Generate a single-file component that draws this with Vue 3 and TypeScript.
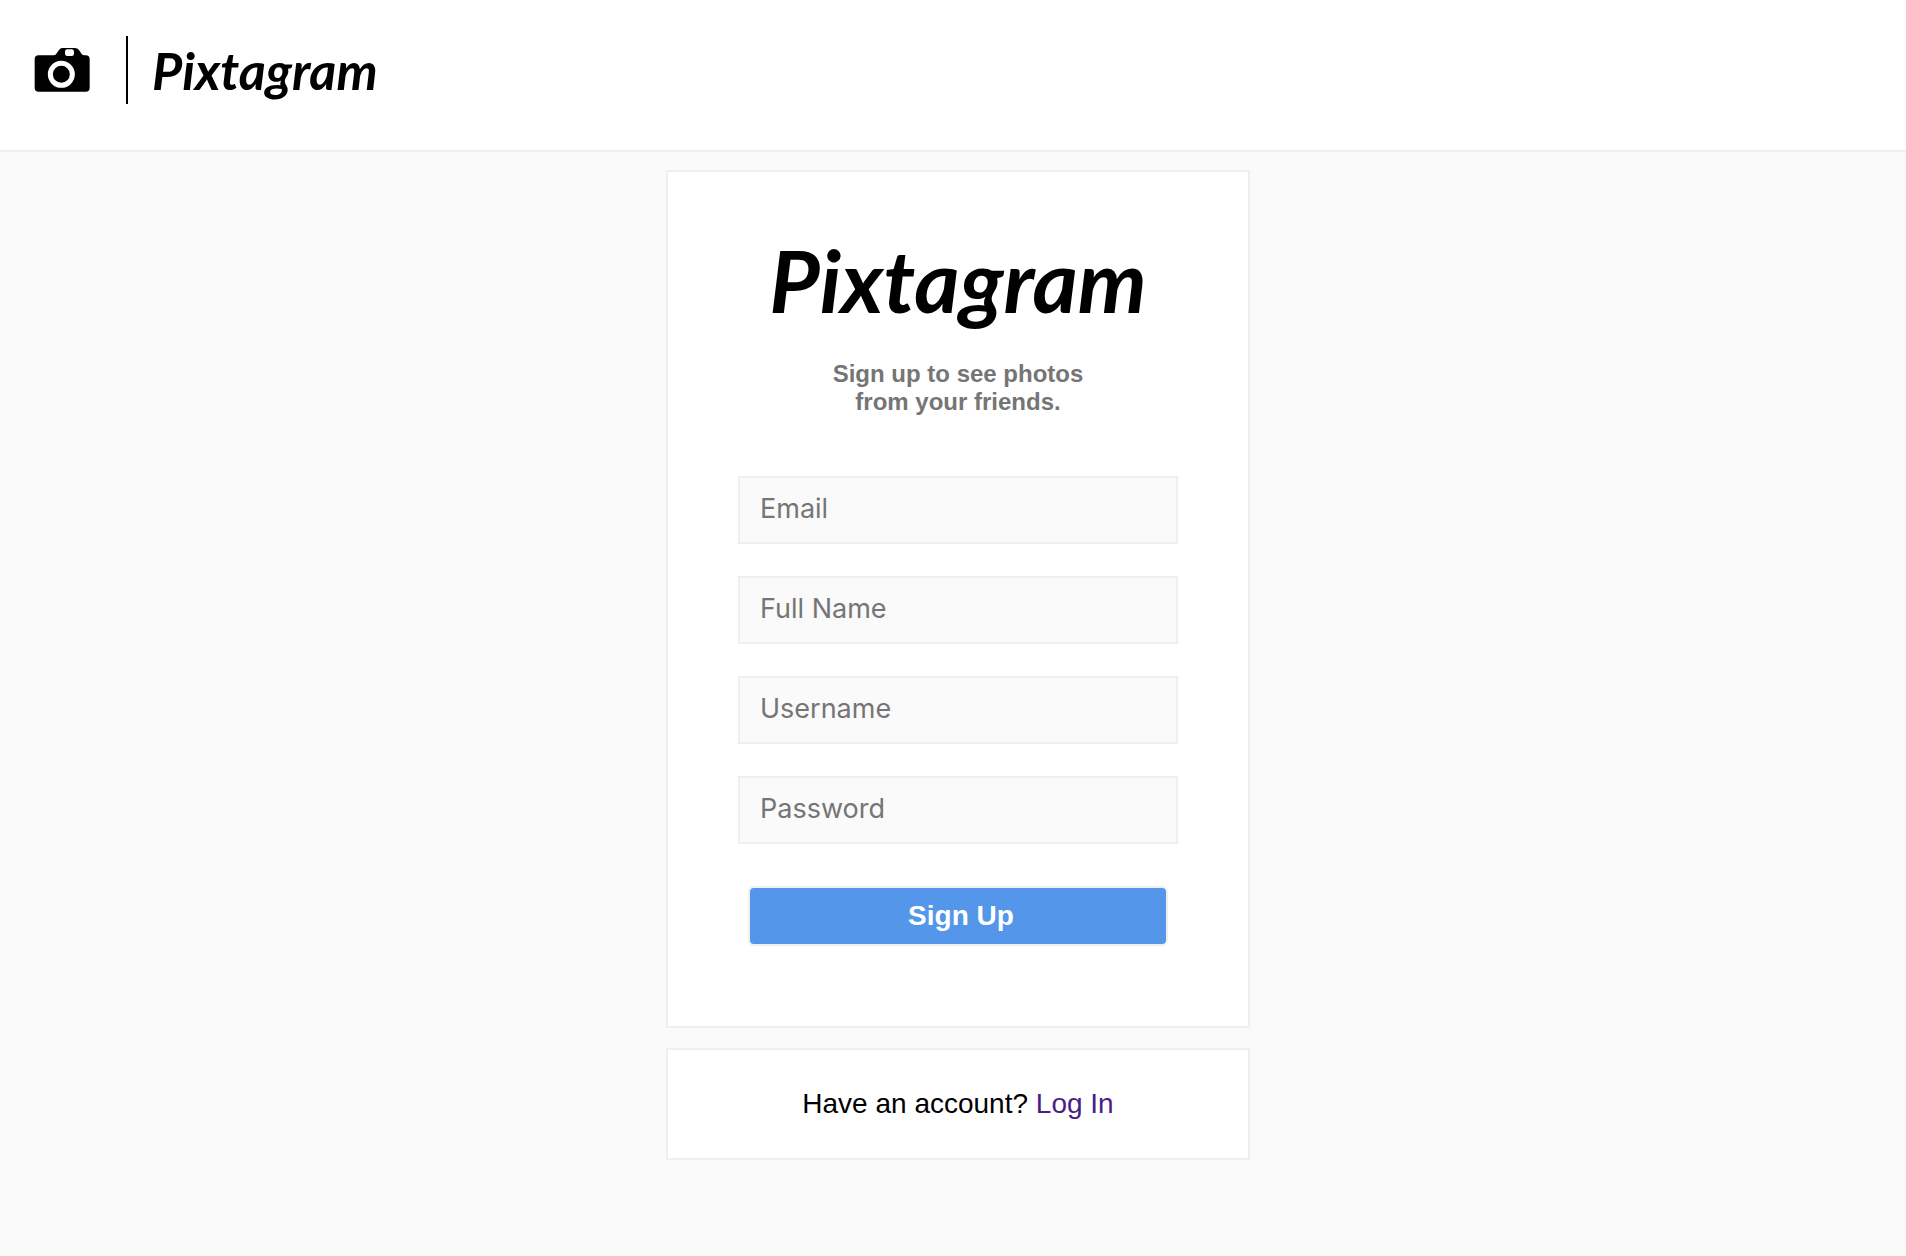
<script setup lang="ts">
import { reactive } from 'vue'

interface Field {
  key: 'email' | 'fullName' | 'username' | 'password'
  label: string
  type: string
}

const fields: Field[] = [
  { key: 'email', label: 'Email', type: 'email' },
  { key: 'fullName', label: 'Full Name', type: 'text' },
  { key: 'username', label: 'Username', type: 'text' },
  { key: 'password', label: 'Password', type: 'password' },
]

const form = reactive({ email: '', fullName: '', username: '', password: '' })
</script>

<template>
  <div class="page">
    <header class="header">
      <svg class="camera" viewBox="-2 0 168 132" aria-hidden="true">
        <path
          fill="#000"
          fill-rule="evenodd"
          d="M12 22H56Q62 22 65 17L73 6Q77 0 83 0H121Q128 0 133 6L141 18Q144 22 149 22H153Q165 22 165 34V119Q165 131 153 131H12Q0 131 0 119V34Q0 22 12 22ZM98 4Q91 4 91 11V17Q91 24 98 24H111Q118 24 118 17V11Q118 4 111 4Z"
        />
        <circle cx="80" cy="79" r="33" fill="#000" stroke="#fff" stroke-width="15" />
      </svg>
      <span class="divider"></span>
      <span class="wordmark">Pixtagram</span>
    </header>

    <main class="content">
      <section class="card signup">
        <h1 class="wordmark wordmark-large">Pixtagram</h1>
        <h2 class="tagline">Sign up to see photos<br />from your friends.</h2>
        <form class="form" @submit.prevent>
          <input
            v-for="field in fields"
            :key="field.key"
            v-model="form[field.key]"
            class="field"
            :type="field.type"
            :placeholder="field.label"
            :aria-label="field.label"
          />
          <button class="submit" type="submit">Sign Up</button>
        </form>
      </section>

      <section class="card login">
        <p class="prompt">Have an account? <a class="link" href="#login">Log In</a></p>
      </section>
    </main>
  </div>
</template>

<style>
body {
  margin: 0;
  background: #fafafa;
}
</style>

<style scoped>
.page {
  min-height: 100vh;
  background: #fafafa;
  color: #000;
  font-family: "Liberation Sans", Arial, sans-serif;
}

.header {
  display: flex;
  align-items: center;
  padding: 36px 34px 46px;
  border-bottom: 2px solid #efefef;
  background: #fff;
}

.camera {
  width: 56px;
  height: 44px;
}

.divider {
  width: 2px;
  height: 68px;
  margin: 0 24px 0 36px;
  background: #000;
}

.wordmark {
  font-family: Lato, sans-serif;
  font-size: 52px;
  font-style: italic;
  font-weight: 700;
  line-height: 68px;
}

.content {
  display: flex;
  flex-direction: column;
  align-items: center;
  gap: 20px;
  padding: 18px 0 96px 10px;
}

.card {
  box-sizing: border-box;
  width: 100%;
  max-width: 584px;
  border: 2px solid #efefef;
  background: #fff;
  text-align: center;
}

.signup {
  padding: 48px 70px 80px;
}

.wordmark-large {
  margin: 0;
  font-size: 87px;
  line-height: 120px;
}

.tagline {
  margin: 20px 0 60px;
  color: #757575;
  font-size: 24px;
  font-weight: 700;
  line-height: 28px;
}

.form {
  display: flex;
  flex-direction: column;
  gap: 32px;
}

.field {
  box-sizing: border-box;
  width: 100%;
  height: 68px;
  padding: 0 20px 4px;
  border: 2px solid #efefef;
  border-radius: 0;
  background: #fafafa;
  color: #000;
  font-family: Inter, sans-serif;
  font-size: 27px;
}

.field::placeholder {
  color: #757575;
  opacity: 1;
}

.submit {
  height: 60px;
  margin: 10px 10px 0;
  padding: 0 0 0 6px;
  border: 2px solid #efefef;
  border-radius: 6px;
  background: #5496ea;
  color: #fff;
  font-family: inherit;
  font-size: 28px;
  font-weight: 700;
}

.login {
  padding: 38px 20px;
}

.prompt {
  margin: 0;
  font-size: 28px;
  line-height: 32px;
}

.link {
  color: #481e86;
  text-decoration: none;
}
</style>
